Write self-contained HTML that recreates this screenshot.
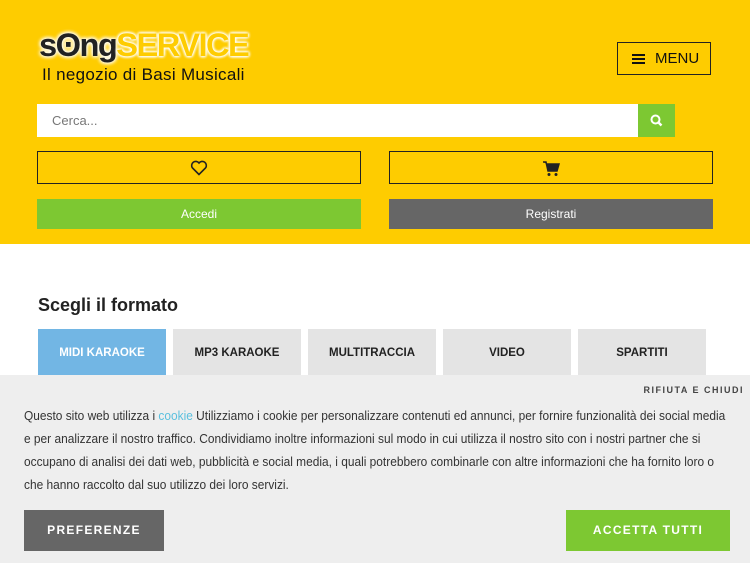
<!DOCTYPE html>
<html><head><meta charset="utf-8"><style>
*{box-sizing:border-box;margin:0;padding:0}
body{width:750px;height:563px;overflow:hidden;font-family:"Liberation Sans",sans-serif;background:#fff;position:relative}
.hdr{position:absolute;left:0;top:0;width:750px;height:244px;background:#fecc00}
.logo{position:absolute;left:39px;top:26px;font-weight:bold;font-size:32px;letter-spacing:-1.5px;line-height:38px;transform:scaleX(1.02);transform-origin:left}
.logo .a{color:#222;text-shadow:0 0 4px #fff,0 0 4px #fff,0 0 4px #fff}
.logo .b{color:#fecc00;text-shadow:0 0 3px #fff,0 0 3px #fff,0 0 3px #fff,0 0 3px #fff}
.tag{position:absolute;left:42px;top:65px;font-size:17px;color:#111;letter-spacing:0.3px}
.menu{position:absolute;left:617px;top:42px;width:94px;height:33px;border:1px solid #222;font-size:15px;color:#111;line-height:31px;padding-left:37px}
.menu i{position:absolute;left:14px;top:11px;width:13px;height:2px;background:#111;box-shadow:0 4px #111,0 8px #111}
.search{position:absolute;left:37px;top:104px;width:601px;height:33px;background:#fff;color:#777;font-size:13px;line-height:33px;padding-left:15px}
.sbtn{position:absolute;left:638px;top:104px;width:37px;height:33px;background:#7dc832}
.box{position:absolute;top:151px;width:324px;height:33px;border:1px solid #222}
.btn{position:absolute;top:199px;width:324px;height:30px;color:#fff;font-size:12px;text-align:center;line-height:30px}
h2{position:absolute;left:38px;top:295px;font-size:18px;color:#222;font-weight:bold}
.tab{position:absolute;top:329px;width:128px;height:48px;background:#e4e4e4;font-size:11.5px;font-weight:bold;color:#222;text-align:center;line-height:48px}
.ck{position:absolute;left:0;top:375px;width:750px;height:188px;background:#eeeeee}
.rif{position:absolute;right:6px;top:10px;font-size:9px;font-weight:bold;letter-spacing:1.5px;color:#444}
.txt{position:absolute;left:24px;top:30px;font-size:12.5px;line-height:23px;color:#333;white-space:nowrap;transform:scaleX(0.953);transform-origin:left}
.txt a{color:#5bc0de}
.cb{position:absolute;top:135px;height:41px;color:#fff;font-size:12px;font-weight:bold;letter-spacing:1.3px;text-align:center;line-height:41px}
</style></head><body>
<div class="hdr">
<div class="logo"><span class="a">sʘng</span><span class="b">SERVICE</span></div>
<div class="tag">Il negozio di Basi Musicali</div>
<div class="menu"><i></i>MENU</div>
<div class="search">Cerca...</div>
<div class="sbtn"><svg width="37" height="33" viewBox="0 0 37 33"><circle cx="17.5" cy="15.5" r="4" fill="none" stroke="#fff" stroke-width="2"/><path d="M20.5 18.5l3 3" stroke="#fff" stroke-width="2.4"/></svg></div>
<div class="box" style="left:37px"><svg style="position:absolute;left:152px;top:8px" width="18" height="16" viewBox="0 0 18 16"><path d="M9 14.5L2.5 8A3.8 3.8 0 0 1 9 3a3.8 3.8 0 0 1 6.5 5z" fill="none" stroke="#222" stroke-width="1.6"/></svg></div>
<div class="box" style="left:389px"><svg style="position:absolute;left:152px;top:9px" width="18" height="16" viewBox="0 0 18 16"><path d="M1 1h3l2 9h9l2-7H5" fill="#222" stroke="#222" stroke-width="1.5"/><circle cx="7" cy="13.5" r="1.5" fill="#222"/><circle cx="14" cy="13.5" r="1.5" fill="#222"/></svg></div>
<div class="btn" style="left:37px;background:#7dc832">Accedi</div>
<div class="btn" style="left:389px;background:#666">Registrati</div>
</div>
<h2>Scegli il formato</h2>
<div class="tab" style="left:38px;background:#72b6e4;color:#fff">MIDI KARAOKE</div>
<div class="tab" style="left:173px">MP3 KARAOKE</div>
<div class="tab" style="left:308px">MULTITRACCIA</div>
<div class="tab" style="left:443px">VIDEO</div>
<div class="tab" style="left:578px">SPARTITI</div>
<div class="ck">
<div class="rif">RIFIUTA E CHIUDI</div>
<div class="txt">Questo sito web utilizza i <a>cookie</a> Utilizziamo i cookie per personalizzare contenuti ed annunci, per fornire funzionalità dei social media<br>e per analizzare il nostro traffico. Condividiamo inoltre informazioni sul modo in cui utilizza il nostro sito con i nostri partner che si<br>occupano di analisi dei dati web, pubblicità e social media, i quali potrebbero combinarle con altre informazioni che ha fornito loro o<br>che hanno raccolto dal suo utilizzo dei loro servizi.</div>
<div class="cb" style="left:24px;width:140px;background:#666">PREFERENZE</div>
<div class="cb" style="left:566px;width:164px;background:#7dc832">ACCETTA TUTTI</div>
</div>
</body></html>
